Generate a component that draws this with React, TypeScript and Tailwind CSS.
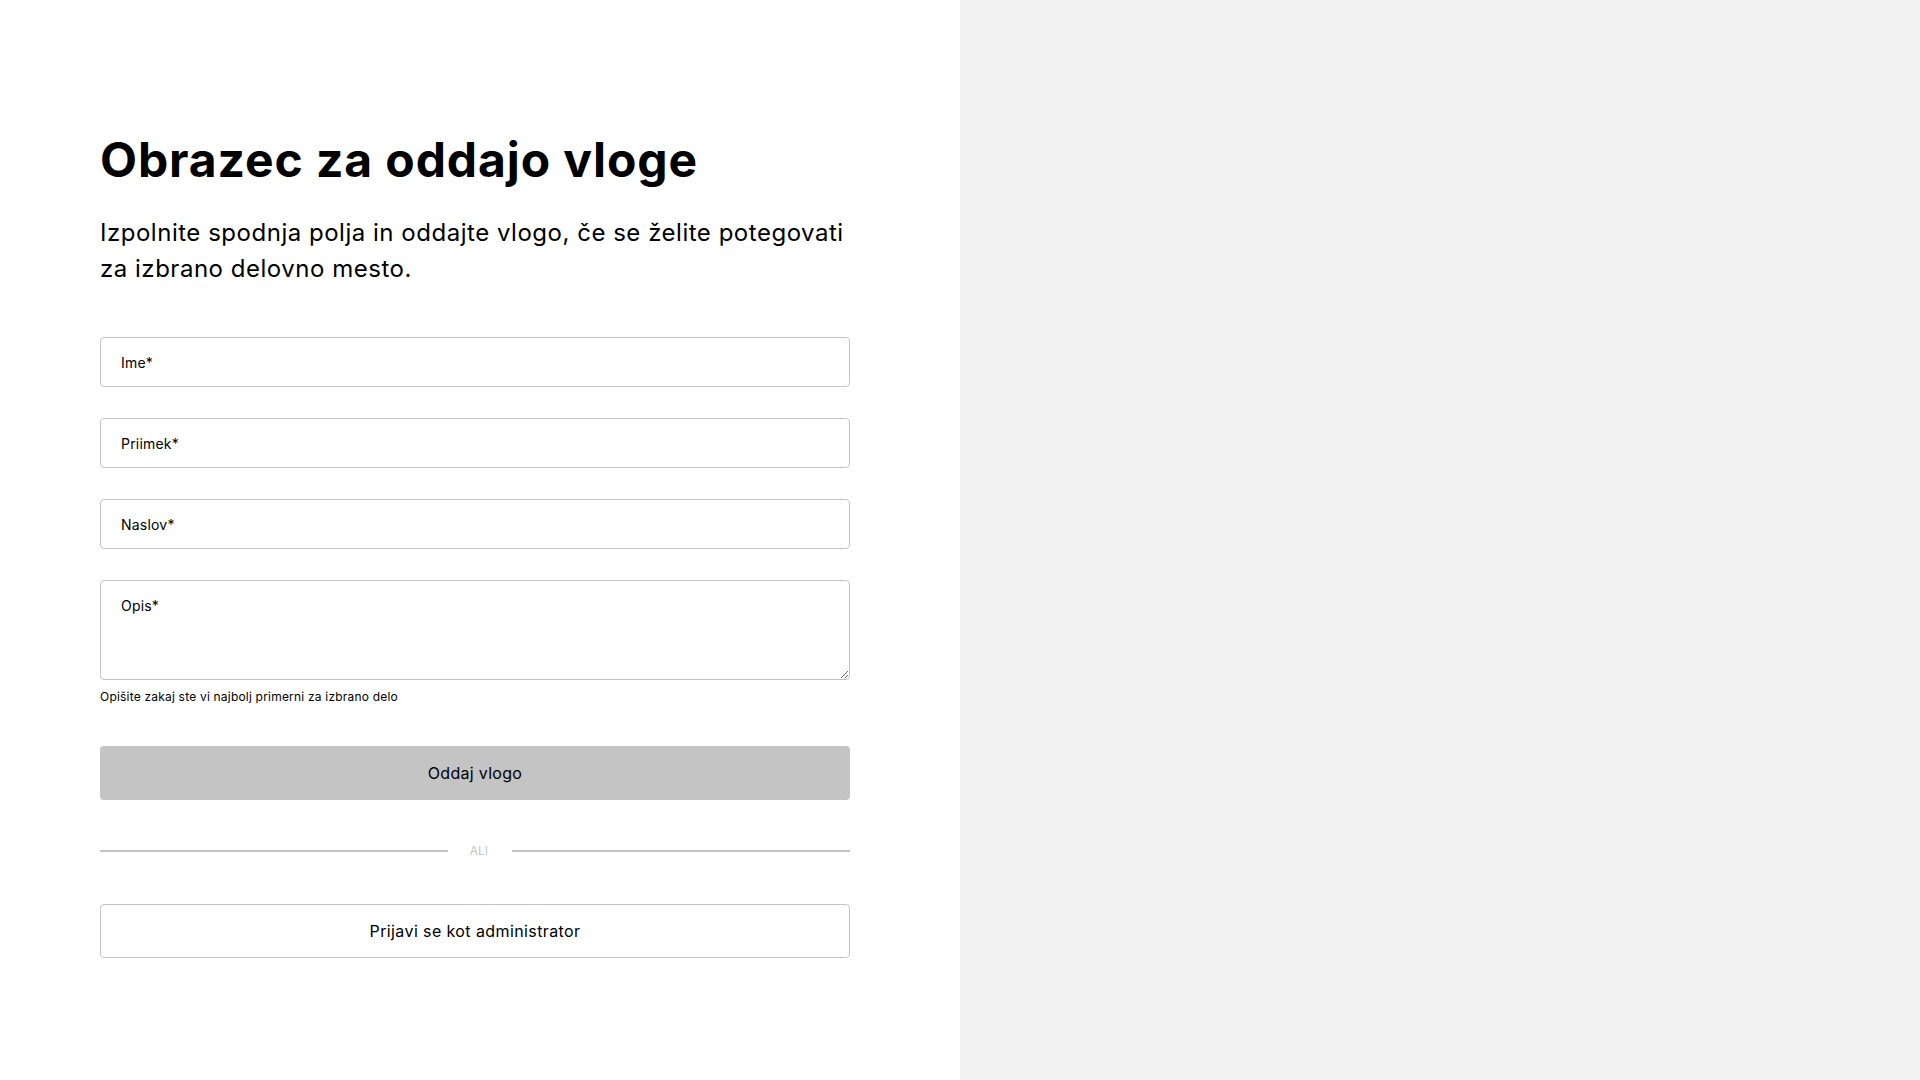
export default function App() {
  const font = { fontFamily: "Inter, 'Noto Sans', sans-serif" };
  return (
    <div className="flex min-h-screen w-full" style={font}>
      <main className="w-[960px] bg-white pl-[100px] pt-[131px] text-black">
        <h1 className="text-[48px] font-bold leading-[58px] tracking-[0.9px]">Obrazec za oddajo vloge</h1>
        <p className="mt-[26px] w-[760px] text-[24px] leading-[36px] tracking-[0.52px]">
          Izpolnite spodnja polja in oddajte vlogo, če se želite potegovati za izbrano delovno mesto.
        </p>

        <form className="mt-[50px] flex w-[750px] flex-col" onSubmit={(e) => e.preventDefault()}>
          <div className="flex flex-col gap-[31px]">
            <input
              className="h-[50px] w-full rounded border border-[#c4c4c4] px-5 text-sm tracking-[0.2px] placeholder:text-black focus:outline-none"
              placeholder="Ime*"
            />
            <input
              className="h-[50px] w-full rounded border border-[#c4c4c4] px-5 text-sm tracking-[0.2px] placeholder:text-black focus:outline-none"
              placeholder="Priimek*"
            />
            <input
              className="h-[50px] w-full rounded border border-[#c4c4c4] px-5 text-sm tracking-[0.2px] placeholder:text-black focus:outline-none"
              placeholder="Naslov*"
            />
            <div>
              <textarea
                className="block h-[100px] w-full rounded border border-[#c4c4c4] px-5 pt-[15px] text-sm tracking-[0.2px] placeholder:text-black focus:outline-none"
                placeholder="Opis*"
              />
              <p className="mt-[9px] text-xs leading-4 tracking-[0.2px]">Opišite zakaj ste vi najbolj primerni za izbrano delo</p>
            </div>
          </div>

          <button type="submit" className="mt-[41px] h-[54px] w-full rounded bg-[#c4c4c4] text-base tracking-[0.3px]">
            Oddaj vlogo
          </button>

          <div className="mt-[43px] flex items-center">
            <div className="h-[2px] flex-1 bg-[#c4c4c4]" />
            <span className="ml-[22px] mr-[24px] text-xs text-[#c4c4c4]">ALI</span>
            <div className="h-[2px] w-[338px] bg-[#c4c4c4]" />
          </div>

          <button type="button" className="mt-[45px] h-[54px] w-full rounded border border-[#c4c4c4] bg-white text-base tracking-[0.4px]">
            Prijavi se kot administrator
          </button>
        </form>
      </main>
      <aside className="flex-1 bg-[#f2f2f2]" />
    </div>
  );
}
